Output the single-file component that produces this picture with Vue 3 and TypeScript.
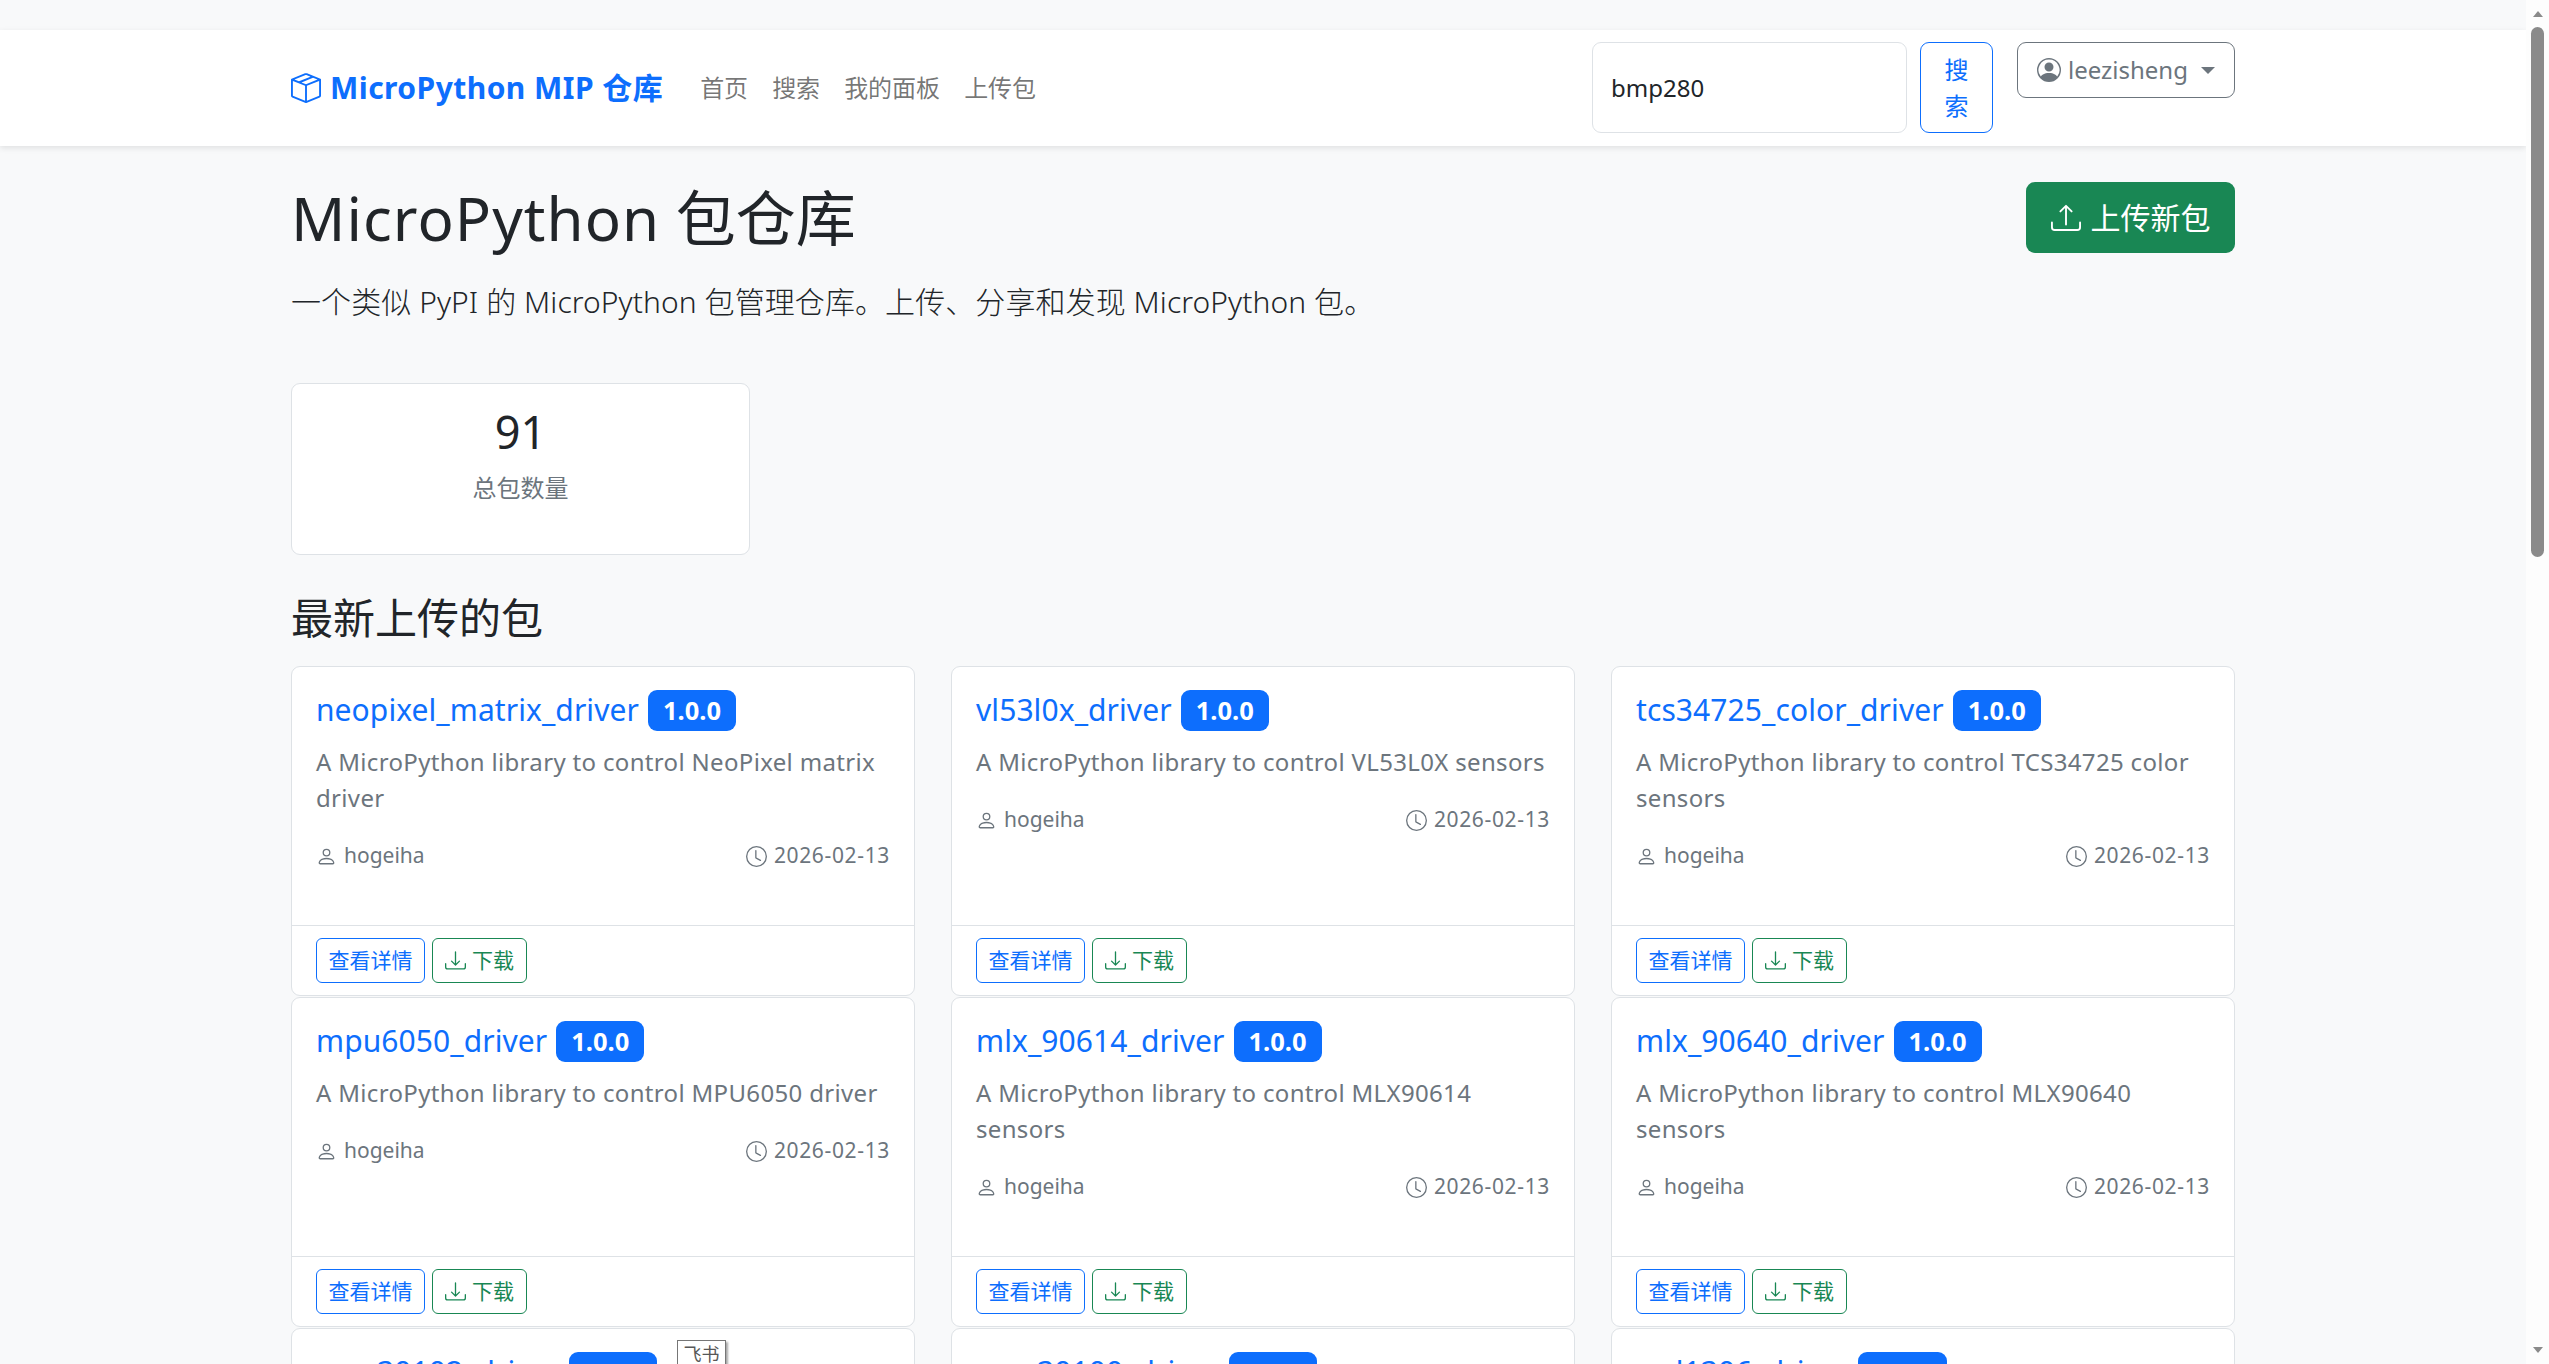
<script setup lang="ts">
interface Pkg {
  name: string
  desc: string
}

const packages: Pkg[] = [
  { name: 'neopixel_matrix_driver', desc: 'A MicroPython library to control NeoPixel matrix driver' },
  { name: 'vl53l0x_driver', desc: 'A MicroPython library to control VL53L0X sensors' },
  { name: 'tcs34725_color_driver', desc: 'A MicroPython library to control TCS34725 color sensors' },
  { name: 'mpu6050_driver', desc: 'A MicroPython library to control MPU6050 driver' },
  { name: 'mlx_90614_driver', desc: 'A MicroPython library to control MLX90614 sensors' },
  { name: 'mlx_90640_driver', desc: 'A MicroPython library to control MLX90640 sensors' },
  { name: 'max30102_driver', desc: 'A MicroPython library to control MAX30102 sensors' },
  { name: 'max30100_driver', desc: 'A MicroPython library to control MAX30100 sensors' },
  { name: 'ssd1306_driver', desc: 'A MicroPython library to control SSD1306 displays' },
]

const navLinks = ['首页', '搜索', '我的面板', '上传包']

const trayPath = 'M.5 9.9a.5.5 0 0 1 .5.5v2.5a1 1 0 0 0 1 1h12a1 1 0 0 0 1-1v-2.5a.5.5 0 0 1 1 0v2.5a2 2 0 0 1-2 2H2a2 2 0 0 1-2-2v-2.5a.5.5 0 0 1 .5-.5'
const icons = {
  box: 'M8.186 1.113a.5.5 0 0 0-.372 0L1.846 3.5l2.404.961L10.404 2zm3.564 1.426L5.596 5 8 5.961 14.154 3.5zm3.25 1.7-6.5 2.6v7.922l6.5-2.6V4.24zM7.5 14.762V6.838L1 4.239v7.925zM7.443.184a1.5 1.5 0 0 1 1.114 0l7.129 2.852A.5.5 0 0 1 16 3.5v8.662a1 1 0 0 1-.629.928l-7.185 2.874a.5.5 0 0 1-.372 0L.63 13.09a1 1 0 0 1-.63-.928V3.5a.5.5 0 0 1 .314-.464z',
  upload: trayPath + 'M7.646 1.146a.5.5 0 0 1 .708 0l3 3a.5.5 0 0 1-.708.708L8.5 2.707V11.5a.5.5 0 0 1-1 0V2.707L5.354 4.854a.5.5 0 1 1-.708-.708z',
  download: trayPath + 'M7.646 11.854a.5.5 0 0 0 .708 0l3-3a.5.5 0 0 0-.708-.708L8.5 10.293V1.5a.5.5 0 0 0-1 0v8.793L5.354 8.146a.5.5 0 1 0-.708.708z',
  person: 'M8 8a3 3 0 1 0 0-6 3 3 0 0 0 0 6m2-3a2 2 0 1 1-4 0 2 2 0 0 1 4 0m4 8c0 1-1 1-1 1H3s-1 0-1-1 1-4 6-4 6 3 6 4m-1-.004c-.001-.246-.154-.986-.832-1.664C11.516 10.68 10.289 10 8 10s-3.516.68-4.168 1.332c-.678.678-.83 1.418-.832 1.664z',
  clock: 'M8 3.5a.5.5 0 0 0-1 0V9a.5.5 0 0 0 .252.434l3.5 2a.5.5 0 0 0 .496-.868L8 8.71zM8 16A8 8 0 1 0 8 0a8 8 0 0 0 0 16m7-8A7 7 0 1 1 1 8a7 7 0 0 1 14 0',
  personCircle: 'M11 6a3 3 0 1 1-6 0 3 3 0 0 1 6 0M0 8a8 8 0 1 1 16 0A8 8 0 0 1 0 8m8-7a7 7 0 0 0-5.468 11.37C3.242 11.226 4.805 10 8 10s4.757 1.225 5.468 2.37A7 7 0 0 0 8 1',
}
</script>

<template>
  <div class="window">
    <div class="page">
      <nav class="navbar">
        <div class="container nav-inner">
          <a class="brand">
            <svg class="brand-icon" viewBox="0 0 16 16" fill="currentColor"><path :d="icons.box" /></svg>
            <span class="brand-text">MicroPython MIP 仓库</span>
          </a>
          <ul class="nav-links">
            <li v-for="link in navLinks" :key="link">{{ link }}</li>
          </ul>
          <form class="search" @submit.prevent>
            <input class="search-input" type="text" value="bmp280" />
            <button class="search-btn" type="button">搜索</button>
          </form>
          <button class="user-btn" type="button">
            <svg class="user-icon" viewBox="0 0 16 16" fill="currentColor"><path :d="icons.personCircle" /></svg>
            leezisheng
            <span class="caret"></span>
          </button>
        </div>
      </nav>

      <main class="container">
        <header class="hero">
          <div>
            <h1 class="hero-title"><span class="hero-latin">MicroPython</span> 包仓库</h1>
            <p class="lead">一个类似 PyPI 的 MicroPython 包管理仓库。上传、分享和发现 MicroPython 包。</p>
          </div>
          <a class="upload-btn">
            <svg class="upload-icon" viewBox="0 0 16 16" fill="currentColor"><path :d="icons.upload" /></svg>
            上传新包
          </a>
        </header>

        <section class="stat-card">
          <div class="stat-num">91</div>
          <div class="stat-label">总包数量</div>
        </section>

        <h2 class="section-title">最新上传的包</h2>

        <div class="pkg-grid">
          <article v-for="pkg in packages" :key="pkg.name" class="pkg-card">
            <div class="pkg-body">
              <h3 class="pkg-title">
                <a class="pkg-name">{{ pkg.name }}</a>
                <span class="badge">1.0.0</span>
              </h3>
              <p class="pkg-desc">{{ pkg.desc }}</p>
              <div class="pkg-meta">
                <span class="meta-item">
                  <svg class="meta-icon" viewBox="0 0 16 16" fill="currentColor"><path :d="icons.person" /></svg>
                  hogeiha
                </span>
                <span class="meta-item meta-date">
                  <svg class="meta-icon" viewBox="0 0 16 16" fill="currentColor"><path :d="icons.clock" /></svg>
                  2026-02-13
                </span>
              </div>
            </div>
            <div class="pkg-footer">
              <a class="btn-sm btn-blue">查看详情</a>
              <a class="btn-sm btn-green">
                <svg class="meta-icon" viewBox="0 0 16 16" fill="currentColor"><path :d="icons.download" /></svg>
                下载
              </a>
            </div>
          </article>
        </div>
      </main>

      <div class="tooltip">飞书</div>
    </div>

    <div class="scrollbar">
      <span class="arrow-up"></span>
      <span class="thumb"></span>
      <span class="arrow-down"></span>
    </div>
  </div>
</template>

<style scoped>
.window {
  display: flex;
  height: 100vh;
  overflow: hidden;
  background: #f8f9fa;
  color: #212529;
  font-family: "Noto Sans", "Noto Sans CJK SC", sans-serif;
  font-size: 24px;
  line-height: 1.5;
}

.page {
  position: relative;
  flex: 1;
  min-width: 0;
  padding-top: 30px;
  overflow: hidden;
}

.container {
  width: 1944px;
  margin: 0 auto;
}

.navbar {
  height: 116px;
  background: #fff;
  box-shadow: 0 2px 6px rgba(0, 0, 0, 0.1);
}

.nav-inner {
  display: flex;
  align-items: flex-start;
  padding-top: 12px;
}

.brand {
  display: flex;
  align-items: center;
  gap: 9px;
  height: 91px;
  color: #0d6efd;
  font-size: 30px;
  font-weight: 700;
  white-space: nowrap;
}

.brand-text {
  letter-spacing: 0.45px;
}

.brand-icon {
  width: 30px;
  height: 30px;
}

.nav-links {
  display: flex;
  gap: 24px;
  height: 91px;
  align-items: center;
  margin: 0 auto 0 37px;
  padding: 0;
  list-style: none;
  color: rgba(0, 0, 0, 0.55);
}

.search {
  display: flex;
  gap: 13px;
  margin-right: 24px;
}

.search-input {
  width: 315px;
  height: 91px;
  box-sizing: border-box;
  padding: 9px 18px;
  border: 1.5px solid #dee2e6;
  border-radius: 9px;
  background: #fff;
  color: #212529;
  font: inherit;
}

.search-btn {
  width: 73px;
  height: 91px;
  padding: 0 18px;
  border: 1.5px solid #0d6efd;
  border-radius: 9px;
  background: transparent;
  color: #0d6efd;
  font: inherit;
}

.user-btn {
  display: flex;
  align-items: center;
  gap: 7px;
  width: 218px;
  height: 56px;
  box-sizing: border-box;
  padding: 0 18px 0 19px;
  border: 1.5px solid #6c757d;
  border-radius: 9px;
  background: transparent;
  color: #6c757d;
  font: inherit;
  white-space: nowrap;
}

.user-icon {
  width: 24px;
  height: 24px;
  flex: none;
}

.caret {
  width: 0;
  height: 0;
  margin-left: 6px;
  border-top: 7px solid #6c757d;
  border-left: 7px solid transparent;
  border-right: 7px solid transparent;
}

.hero {
  display: flex;
  justify-content: space-between;
  align-items: flex-start;
  padding-top: 36px;
}

.hero-title {
  margin: 0 0 25px;
  font-size: 60px;
  font-weight: 400;
  line-height: 1.2;
  white-space: nowrap;
}

.hero-latin {
  letter-spacing: 1.05px;
}

.lead {
  margin: 0;
  font-size: 30px;
  font-weight: 300;
  letter-spacing: 0.08px;
}

.upload-btn {
  display: flex;
  align-items: center;
  gap: 10px;
  box-sizing: border-box;
  width: 209px;
  height: 71px;
  justify-content: center;
  border-radius: 9px;
  background: #198754;
  color: #fff;
  font-size: 30px;
}

.upload-icon {
  width: 30px;
  height: 30px;
}

.stat-card {
  box-sizing: border-box;
  width: 459px;
  height: 172px;
  margin-top: 59px;
  padding-top: 21px;
  border: 1.5px solid #dee2e6;
  border-radius: 9px;
  background: #fff;
  text-align: center;
}

.stat-num {
  font-size: 45px;
  line-height: 54px;
}

.stat-label {
  margin-top: 11px;
  color: #6c757d;
}

.section-title {
  margin: 38px 0 23px;
  font-size: 42px;
  font-weight: 400;
  line-height: 1.2;
}

.pkg-grid {
  display: grid;
  grid-template-columns: repeat(3, 624px);
  column-gap: 36px;
  row-gap: 1.5px;
}

.pkg-card {
  display: flex;
  flex-direction: column;
  box-sizing: border-box;
  border: 1.5px solid #dee2e6;
  border-radius: 9px;
  background: #fff;
}

.pkg-body {
  flex: 1;
  padding: 23px 24px 24px;
}

.pkg-title {
  display: flex;
  align-items: center;
  gap: 9px;
  height: 41px;
  margin: 0 0 13px;
  font-size: 30px;
  font-weight: 400;
}

.pkg-name {
  margin-bottom: 2px;
  color: #0d6efd;
  letter-spacing: 0.08px;
}

.badge {
  padding: 0 15px;
  border-radius: 9px;
  background: #0d6efd;
  color: #fff;
  font-size: 25.5px;
  font-weight: 700;
  line-height: 41px;
}

.pkg-desc {
  margin: 0 0 24px;
  color: #6c757d;
  letter-spacing: 0.33px;
}

.pkg-meta {
  display: flex;
  justify-content: space-between;
  margin-bottom: 29px;
  color: #6c757d;
  font-size: 21px;
}

.meta-item {
  display: flex;
  align-items: center;
  gap: 7px;
}

.meta-date {
  letter-spacing: 0.65px;
}

.meta-icon {
  width: 21px;
  height: 21px;
}

.pkg-footer {
  display: flex;
  gap: 7px;
  padding: 12px 24px;
  border-top: 1.5px solid #dee2e6;
}

.btn-sm {
  display: flex;
  align-items: center;
  gap: 6px;
  box-sizing: border-box;
  height: 45px;
  padding: 0 11.5px;
  border: 1.5px solid;
  border-radius: 6px;
  font-size: 21px;
}

.btn-blue {
  color: #0d6efd;
}

.btn-green {
  padding: 0 12px;
  color: #198754;
}

.tooltip {
  position: absolute;
  left: 677px;
  top: 1340px;
  width: 49px;
  height: 30px;
  box-sizing: border-box;
  border: 1px solid #767676;
  background: #fff;
  box-shadow: 2px 2px 2px rgba(0, 0, 0, 0.35);
  color: #575757;
  font-size: 18px;
  line-height: 26px;
  text-align: center;
}

.scrollbar {
  position: relative;
  flex: none;
  width: 23px;
  background: #fdfdfd;
}

.arrow-up,
.arrow-down {
  position: absolute;
  left: 7px;
  width: 0;
  height: 0;
  border-left: 5px solid transparent;
  border-right: 5px solid transparent;
}

.arrow-up {
  top: 11px;
  border-bottom: 6px solid #8a8a8a;
}

.arrow-down {
  bottom: 11px;
  border-top: 6px solid #8a8a8a;
}

.thumb {
  position: absolute;
  top: 27px;
  left: 5px;
  width: 13px;
  height: 530px;
  border-radius: 7px;
  background: #8a8a8a;
}
</style>

<style>
body {
  overflow: hidden;
}
</style>
